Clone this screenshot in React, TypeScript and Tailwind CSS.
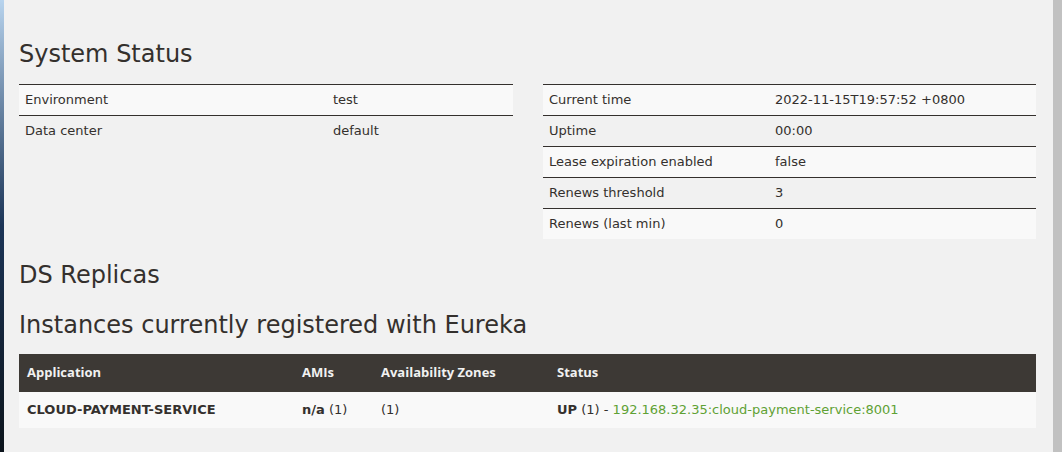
const leftRows = [
  ["Environment", "test"],
  ["Data center", "default"],
]

const rightRows = [
  ["Current time", "2022-11-15T19:57:52 +0800"],
  ["Uptime", "00:00"],
  ["Lease expiration enabled", "false"],
  ["Renews threshold", "3"],
  ["Renews (last min)", "0"],
]

const heading = "text-[24px] leading-[28px] text-[#34302d] font-['DejaVu_Sans',sans-serif]"

function InfoTable({ rows, labelWidth }: { rows: string[][]; labelWidth: string }) {
  return (
    <table className="w-full border-collapse text-[13px] leading-[20px]">
      <tbody>
        {rows.map(([label, value], i) => (
          <tr key={label} className={i % 2 === 0 ? "bg-[#f9f9f9]" : ""}>
            <td className={`${labelWidth} border-t border-[#34302d] px-[6px] py-[5px]`}>{label}</td>
            <td className="border-t border-[#34302d] px-[6px] py-[5px]">{value}</td>
          </tr>
        ))}
      </tbody>
    </table>
  )
}

export default function App() {
  return (
    <div className="flex h-[452px] w-[1062px] overflow-hidden font-['DejaVu_Sans',sans-serif] text-[#34302d]">
      <div className="w-[4px] bg-gradient-to-b from-[#b8d4ee] via-[#1c3557] to-[#0c141c]" />
      <div className="flex-1 bg-[#f1f1f1] pl-[15px] pr-[17px]">
        <h1 className={`${heading} mt-[40px]`}>System Status</h1>
        <div className="mt-[16px] flex gap-[30px]">
          <div className="w-[494px]">
            <InfoTable rows={leftRows} labelWidth="w-[308px]" />
          </div>
          <div className="flex-1">
            <InfoTable rows={rightRows} labelWidth="w-[226px]" />
          </div>
        </div>
        <h1 className={`${heading} mt-[22px]`}>DS Replicas</h1>
        <h1 className={`${heading} mt-[22px]`}>Instances currently registered with Eureka</h1>
        <table className="mt-[15px] w-full border-collapse text-[13px]">
          <thead>
            <tr className="h-[38px] bg-[#3d3935] text-left font-['Open_Sans',sans-serif] text-[#f1f1f1]">
              <th className="w-[275px] px-[8px] font-bold">Application</th>
              <th className="w-[79px] px-[8px] font-bold">AMIs</th>
              <th className="w-[176px] px-[8px] font-bold">Availability Zones</th>
              <th className="px-[8px] font-bold">Status</th>
            </tr>
          </thead>
          <tbody>
            <tr className="h-[36px] bg-[#f9f9f9]">
              <td className="px-[8px] font-semibold">CLOUD-PAYMENT-SERVICE</td>
              <td className="px-[8px]">
                <b className="font-semibold">n/a</b> (1)
              </td>
              <td className="px-[8px]">(1)</td>
              <td className="px-[8px]">
                <b className="font-semibold">UP</b> (1) - <a className="text-[#5fa134]">192.168.32.35:cloud-payment-service:8001</a>
              </td>
            </tr>
          </tbody>
        </table>
      </div>
      <div className="w-[9px] bg-[#c1c1c1]" />
    </div>
  )
}
